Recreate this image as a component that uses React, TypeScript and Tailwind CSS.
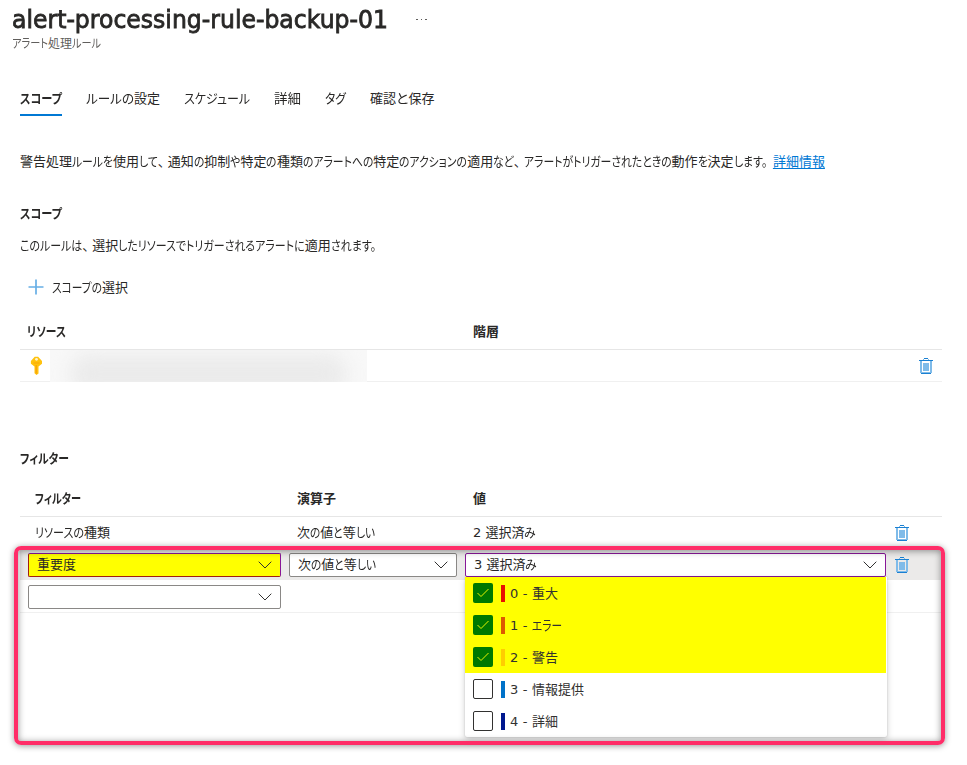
import { useLayoutEffect, useRef, type ReactNode } from "react";

const KANA = /([\u3002\u3040-\u30ff]+|\u3001)/;

type FitProps = { children: string; w: number; className?: string; whole?: boolean };

// Sets text on one line at width `w`: kana are condensed, kanji keep their natural width.
function Fit({ children, w, className = "", whole = false }: FitProps) {
  const ref = useRef<HTMLSpanElement>(null);
  const parts = whole ? [children] : children.split(KANA).filter(Boolean);
  const flexible = (p: string) => whole || (p !== "、" && KANA.test(p));
  useLayoutEffect(() => {
    const spans = Array.from(ref.current!.children) as HTMLElement[];
    const inner = spans.map((s) => s.firstElementChild as HTMLElement);
    const outer = spans.map((s) => s.getBoundingClientRect().width);
    const widths = inner.map((s) => s.getBoundingClientRect().width);
    let fixed = 0;
    let loose = 0;
    parts.forEach((p, i) => {
      if (flexible(p)) loose += widths[i];
      else fixed += outer[i];
    });
    if (!loose) return;
    const k = (w - fixed) / loose;
    parts.forEach((p, i) => {
      if (!flexible(p)) return;
      spans[i].style.width = `${widths[i] * k}px`;
      inner[i].style.transform = `scaleX(${k})`;
    });
  }, []);
  return (
    <span ref={ref} className={`inline-flex shrink-0 whitespace-pre ${className}`}>
      {parts.map((p, i) => (
        <span key={i} className={p === "、" ? "inline-block w-[10px]" : "inline-block"}>
          <span className="inline-block origin-left">{p}</span>
        </span>
      ))}
    </span>
  );
}

function Trash() {
  return (
    <svg width="14" height="16" viewBox="0 0 14 16" shapeRendering="crispEdges" className="block">
      <path d="M1 3h2v12H1zM11 3h2v12h-2zM4 5h6v8H4zM4 1h1v1H4zM9 1h1v1H9zM3 14h8v1H3z" fill="#7fbbe9" />
      <path d="M0 2h14v1H0zM5 0h4v1H5zM2 15h10v1H2z" fill="#1a80d2" />
    </svg>
  );
}

function Chevron() {
  return (
    <svg width="14" height="8" viewBox="0 0 14 8" className="block shrink-0">
      <path d="M.7.7 7 7 13.3.7" fill="none" stroke="#323130" strokeWidth="1" />
    </svg>
  );
}

function Select({ children, className }: { children?: ReactNode; className: string }) {
  return (
    <div className={`flex h-6 items-center justify-between rounded-[2px] border pr-2 pl-2 ${className}`}>
      <span className="flex">{children}</span>
      <Chevron />
    </div>
  );
}

const tabs = [
  { label: "スコープ", w: 42, active: true },
  { label: "ルールの設定", w: 74 },
  { label: "スケジュール", w: 66 },
  { label: "詳細", w: 27, whole: true },
  { label: "タグ", w: 21 },
  { label: "確認と保存", w: 64.5 },
];

const options = [
  { label: "0 - 重大", w: 49, bar: "bg-[#e81000]", on: true },
  { label: "1 - エラー", w: 52, bar: "bg-[#dd5900]", on: true },
  { label: "2 - 警告", w: 49, bar: "bg-[#ffcd00]", on: true },
  { label: "3 - 情報提供", w: 75, bar: "bg-[#0072c9]", on: false },
  { label: "4 - 詳細", w: 49, bar: "bg-[#00188f]", on: false },
];

export default function App() {
  return (
    <div
      lang="ja"
      className="relative h-[765px] w-[967px] overflow-hidden bg-white font-['DejaVu_Sans','Noto_Sans_CJK_JP',sans-serif] text-[13px] leading-5 text-[#292827] [font-feature-settings:'palt']"
    >
      <header className="flex h-[55px] flex-col pl-3">
        <div className="flex h-[35px] items-center pt-1">
          <h1 className="text-[24px] leading-8 font-normal [-webkit-text-stroke:0.8px_#292827]">
            <Fit w={376} whole>alert-processing-rule-backup-01</Fit>
          </h1>
          <div className="ml-[28px] flex gap-[3px]">
            <i className="size-[1.5px] bg-[#605e5c]" />
            <i className="size-[1.5px] bg-[#605e5c]" />
            <i className="size-[1.5px] bg-[#605e5c]" />
          </div>
        </div>
        <p className="flex h-[17px] items-center text-[12px] text-[#605e5c]">
          <Fit w={89}>アラート処理ルール</Fit>
        </p>
      </header>

      <main className="w-[942px] pl-5">
        <nav className="flex h-[61px] items-end gap-6">
          {tabs.map((t) => (
            <div
              key={t.label}
              className={`flex h-[27px] items-start border-b-2 ${t.active ? "border-[#0078d4] font-bold" : "border-transparent"}`}
            >
              <Fit w={t.w} whole={t.whole}>{t.label}</Fit>
            </div>
          ))}
        </nav>

        <p className="mt-9 flex h-5 gap-[6px]">
          <Fit w={747}>
            警告処理ルールを使用して、通知の抑制や特定の種類のアラートへの特定のアクションの適用など、アラートがトリガーされたときの動作を決定します。
          </Fit>
          <a className="text-[#0078d4] underline underline-offset-2">詳細情報</a>
        </p>

        <h2 className="mt-8 flex h-5 font-bold"><Fit w={42}>スコープ</Fit></h2>
        <p className="mt-3 flex h-5"><Fit w={356}>このルールは、選択したリソースでトリガーされるアラートに適用されます。</Fit></p>
        <div className="mt-[22px] flex h-5 items-center gap-2 pl-2">
          <svg width="16" height="16" viewBox="0 0 16 16" className="mb-[3px] block">
            <path d="M8 .5v15M.5 8h15" stroke="#0078d4" strokeOpacity=".6" strokeWidth="1.7" />
          </svg>
          <Fit w={76}>スコープの選択</Fit>
        </div>

        <section className="mt-6">
          <div className="flex h-[28px] border-b border-[#e6e6e6] pl-[7px] font-bold">
            <div className="w-[446px]"><Fit w={39}>リソース</Fit></div>
            <div>階層</div>
          </div>
          <div className="flex h-8 items-stretch border-b border-[#f0f0f0]">
            <div className="flex w-[30px] items-center pl-[10px]">
              <svg width="13" height="19" viewBox="0 0 12 19" className="block">
                <path d="M4.2.8h3.4L11.5 5v2.8L8 10.5v7L6 19l-2-1.7v-6.8L.4 7.8V5z" fill="#ffc20e" />
                <path d="M5 9h1.5v9L5 17zM3 6.5h6v1H3z" fill="#f9a60a" />
                <circle cx="6" cy="3.3" r="1.4" fill="#fff3cf" />
              </svg>
            </div>
            <div className="-mb-px w-[317px] overflow-hidden bg-[#f8f8f8]">
              <div className="mx-5 mt-1 h-10 rounded-full bg-[#ebebeb] blur-[9px]" />
            </div>
            <div className="ml-auto flex items-center pr-[9px]"><Trash /></div>
          </div>
        </section>

        <h2 className="mt-[67px] flex h-5 font-bold"><Fit w={49}>フィルター</Fit></h2>

        <section>
          <div className="mt-5 flex h-[28px] border-b border-[#e6e6e6] pl-[15px] font-bold">
            <div className="w-[262px]"><Fit w={46}>フィルター</Fit></div>
            <div className="w-[176px]"><Fit w={39}>演算子</Fit></div>
            <div>値</div>
          </div>
          <div className="flex h-8 items-center pl-[15px]">
            <div className="flex w-[262px]"><Fit w={75}>リソースの種類</Fit></div>
            <div className="flex w-[176px]"><Fit w={78}>次の値と等しい</Fit></div>
            <div className="flex"><Fit w={63}>2 選択済み</Fit></div>
            <div className="mr-[33px] ml-auto"><Trash /></div>
          </div>
          <div className="relative flex h-[31px] items-start bg-[#ebeae9] pt-1 pl-2">
            <Select className="w-[253px] border-[#881798] border-b-[#a02010] border-l-[#a02010] bg-[#ffff00]"><span>重要度</span></Select>
            <Select className="ml-2 w-[168px] border-[#8a8886] bg-white"><Fit w={78}>次の値と等しい</Fit></Select>
            <Select className="ml-2 w-[421px] border-[#881798] bg-white"><Fit w={63}>3 選択済み</Fit></Select>
            <div className="mt-1 ml-[9px]"><Trash /></div>

            <div className="absolute top-[28px] left-[445px] z-10 w-[422px] rounded-b-[2px] bg-white shadow-[0_3px_7px_rgba(0,0,0,0.18),0_0_2px_rgba(0,0,0,0.18)]">
              {options.map((o) => (
                <div key={o.label} className={`flex h-8 items-center pl-2 ${o.on ? "mr-px bg-[#ffff00]" : ""}`}>
                  {o.on ? (
                    <div className="flex size-5 items-center justify-center rounded-[2px] bg-[#007800]">
                      <svg width="14" height="10" viewBox="0 0 14 10"><path d="M1.5 5 5 8.5 12.5 1" fill="none" stroke="#e9f500" strokeWidth="1" /></svg>
                    </div>
                  ) : (
                    <div className="size-5 rounded-[2px] border border-[#323130] bg-white" />
                  )}
                  <div className={`ml-2 h-[17px] w-1 ${o.bar}`} />
                  <span className="ml-[5px] flex pt-0.5 text-[#323130] [word-spacing:0.4px]"><Fit w={o.w}>{o.label}</Fit></span>
                </div>
              ))}
            </div>
          </div>
          <div className="flex h-[33px] items-start border-b border-[#f0f0f0] pt-[5px] pl-2">
            <Select className="w-[253px] border-[#8a8886] bg-white" />
          </div>
        </section>
      </main>

      <div className="pointer-events-none absolute top-[546px] left-[14px] z-20 h-[199px] w-[931px] rounded-[7px] border-[4.5px] border-[#ff2d68] shadow-[0_1px_6px_rgba(0,0,0,0.4),inset_0_1px_7px_rgba(0,0,0,0.42)]" />
    </div>
  );
}
